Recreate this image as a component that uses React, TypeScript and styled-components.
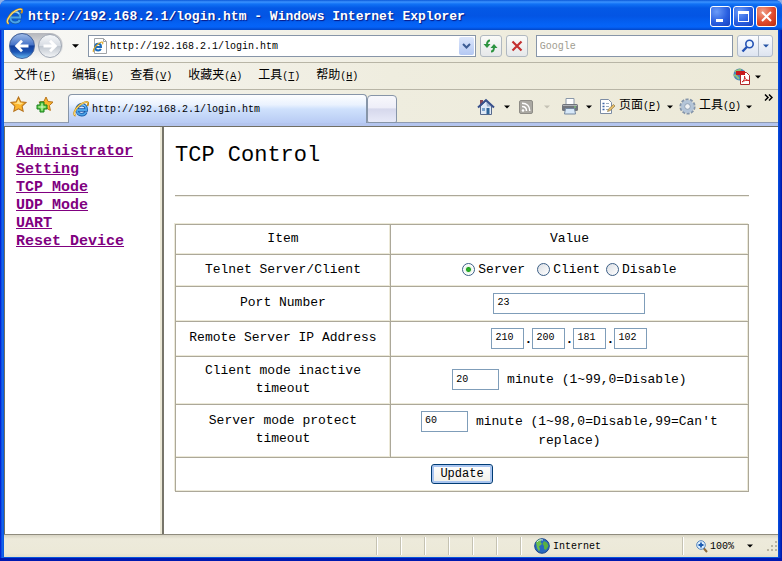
import React from "react";
import styled, { createGlobalStyle, css } from "styled-components";

const MONO = `"Liberation Mono", "Noto Sans CJK SC", monospace`;

const GlobalStyle = createGlobalStyle`
  *, *::before, *::after { box-sizing: border-box; }
  body { margin: 0; background: #8fb0e8; font-family: ${MONO}; color: #000; }
  button, input { font-family: inherit; margin: 0; }
  button { padding: 0; border: 0; background: none; color: inherit; }
`;

/* ---------- window frame ---------- */

const Window = styled.div`
  min-height: 100vh;
  display: flex;
  flex-direction: column;
  padding: 0 4px 4px;
  border-radius: 7px 7px 0 0;
  background: linear-gradient(90deg, #0019cf 0, #0831d9 1px, #166aee 2px, #0855dd 4px, #0855dd calc(100% - 4px), #0441d8 calc(100% - 3px), #0013a5 100%);
  box-shadow: inset 0 -3px 0 #0018b0;
`;

const TitleBar = styled.header`
  height: 30px;
  margin: 0 -4px;
  padding: 2px 5px 0 6px;
  display: flex;
  align-items: center;
  gap: 5px;
  border-radius: 7px 7px 0 0;
  background: linear-gradient(#0a58d8 0, #3b93ff 2px, #1172f5 4px, #0459e6 8px, #0355e4 16px, #0462f5 24px, #0563f8 27px, #0246c8 30px);
`;

const Title = styled.h1`
  flex: 1;
  margin: 0;
  padding-top: 2px;
  font-size: 13px;
  line-height: 18px;
  color: #fff;
  text-shadow: 1px 1px 1px #0a1883;
  white-space: nowrap;
  overflow: hidden;
`;

const Captions = styled.div`
  display: flex;
  gap: 2px;
`;

const CaptionButton = styled.button<{ $close?: boolean }>`
  width: 21px;
  height: 21px;
  display: grid;
  place-items: center;
  border: 1px solid #fff;
  border-radius: 3px;
  background: ${(p) =>
    p.$close
      ? "radial-gradient(circle at 30% 25%, #f0a088, #e0492c 55%, #b82c10)"
      : "radial-gradient(circle at 30% 25%, #6c9cf8, #2a5fe0 55%, #1540c0)"};
`;

/* ---------- toolbars ---------- */

const NavBar = styled.div`
  height: 32px;
  display: flex;
  align-items: center;
  padding: 0 5px;
  background: linear-gradient(90deg, #f8f8f6, #efeddf 60%, #ece9d8);
`;

const NavPair = styled.div`
  display: flex;
  align-items: center;
  height: 26px;
  gap: 3px;
  padding-right: 1px;
  border-radius: 13px;
  background: linear-gradient(#b4b6bc, #e8e8e8 60%, transparent);
`;

const RoundButton = styled.button<{ $active?: boolean }>`
  width: ${(p) => (p.$active ? 26 : 24)}px;
  height: ${(p) => (p.$active ? 26 : 24)}px;
  border-radius: 50%;
  display: grid;
  place-items: center;
  border: 1px solid ${(p) => (p.$active ? "#40609c" : "#a0a8b4")};
  background: ${(p) =>
    p.$active
      ? "linear-gradient(#9db9e6 0, #4674c8 45%, #123f9c 50%, #1c55b4 75%, #62b4ee)"
      : "linear-gradient(#f6f8fa 0, #d8dde4 48%, #c0c7d0 52%, #f2f4f6)"};
`;

const ArrowButton = styled.button<{ $w: number }>`
  width: ${(p) => p.$w}px;
  height: 20px;
  display: grid;
  place-items: center;
`;

const boxed = css`
  height: 22px;
  border: 1px solid #8795a8;
  background: #fff;
`;

const AddressBox = styled.div`
  ${boxed}
  flex: 2 1 9px;
  min-width: 0;
  display: flex;
  align-items: center;
  padding: 0 1px 0 3px;
  gap: 2px;
`;

const BareInput = styled.input`
  flex: 1;
  min-width: 0;
  border: 0;
  padding: 1px 0 0;
  height: 18px;
  background: transparent;
  font-size: 10px;
  outline: none;
`;

const DropButton = styled.button`
  width: 15px;
  height: 18px;
  display: grid;
  place-items: center;
  border-radius: 2px;
  background: linear-gradient(#dce6fb, #b4c8f2);
`;

const ToolButton = styled.button`
  width: 22px;
  height: 22px;
  margin-left: 4px;
  display: grid;
  place-items: center;
  border: 1px solid #b0b8c0;
  border-radius: 3px;
  background: linear-gradient(#fbfbf8, #e6e8ea);
`;

const SearchInput = styled.input`
  ${boxed}
  flex: 1 1 0;
  min-width: 0;
  margin-left: 8px;
  padding: 0 3px;
  font-size: 10px;
  outline: none;
  &::placeholder { color: #a09c90; opacity: 1; }
`;

const SearchGroup = styled.div`
  display: flex;
  height: 22px;
  margin-left: 4px;
  border: 1px solid #b0bac8;
  border-radius: 3px;
  background: linear-gradient(#fcfdff, #dde4f0);
  button { display: grid; place-items: center; }
  button:first-child { width: 21px; border-right: 1px solid #b0bac8; }
  button:last-child { width: 13px; }
`;

const MenuBar = styled.nav`
  height: 28px;
  display: flex;
  align-items: center;
  gap: 16px;
  padding: 1px 17px 0 10px;
  border-top: 1px solid #b8b5a6;
  border-bottom: 1px solid #b8b5a6;
  background: linear-gradient(90deg, #f6f5f1, #efeddf 50%, #ece9d8);
`;

const MenuButton = styled.button`
  font-size: 12px;
  line-height: 18px;
  white-space: nowrap;
  span { font-size: 10px; }
`;

const PdfButton = styled.button`
  margin-left: auto;
  display: flex;
  align-items: center;
  gap: 5px;
`;

const TabRow = styled.div`
  height: 36px;
  display: flex;
  align-items: flex-end;
  padding: 0 4px 0 5px;
  border-bottom: 3px solid #b4c5ee;
  box-shadow: inset 0 -1px 0 #8f9bb0;
  background: linear-gradient(90deg, #f4f4f0, #efeddf 50%, #ece9d8);
`;

const Favorites = styled.div`
  display: flex;
  gap: 9px;
  width: 59px;
  height: 27px;
  padding-left: 1px;
  align-items: flex-start;
`;

const Tab = styled.button`
  flex: 0 1 299px;
  min-width: 120px;
  height: 29px;
  display: flex;
  align-items: center;
  gap: 3px;
  padding: 0 4px;
  border: 1px solid #8795a8;
  border-bottom: 0;
  border-radius: 4px 4px 0 0;
  background: linear-gradient(#fdfeff 0, #eaf2fe 35%, #cfe1fc 50%, #b8cbf4);
  font-size: 10px;
  text-align: left;
  white-space: nowrap;
`;

const NewTab = styled.button`
  width: 30px;
  height: 28px;
  border: 1px solid #8795a8;
  border-radius: 4px 4px 2px 2px;
  background: linear-gradient(#f8f8fc 0, #eeeef8 45%, #d6d8ec 50%, #e8eaf8);
`;

const Commands = styled.div`
  flex: 1;
  height: 33px;
  display: flex;
  align-items: center;
  justify-content: flex-end;
`;

const Command = styled.button`
  display: flex;
  align-items: center;
  gap: 3px;
`;

const CommandLabel = styled.div`
  font-size: 12px;
  line-height: 18px;
  white-space: nowrap;
  span { font-size: 10px; }
`;

const More = styled.button`
  align-self: flex-start;
  width: 11px;
  margin-left: 6px;
`;

/* ---------- page ---------- */

const Frames = styled.div`
  flex: 1;
  display: flex;
  border-top: 1px solid #716f64;
  border-left: 1px solid #716f64;
  background: #fff;
`;

const Sidebar = styled.nav`
  flex: 0 0 159px;
  padding: 16px 8px 0 11px;
  border-right: 2px solid #77756a;
  box-shadow: inset -2px 0 0 #ece9d8;
  display: flex;
  flex-direction: column;
  align-items: flex-start;
`;

const SideLink = styled.a`
  font-size: 15px;
  line-height: 18px;
  font-weight: bold;
  color: #800080;
  text-decoration: underline;
`;

const Main = styled.main`
  flex: 1;
  min-width: 0;
  padding: 15px 29px 0 11px;
`;

const Heading = styled.h2`
  margin: 0;
  font-size: 22px;
  line-height: 28px;
  font-weight: normal;
`;

const Rule = styled.hr`
  margin: 25px 0 27px;
  border: 0;
  border-top: 1px solid #aca899;
  border-bottom: 1px solid #f0eee4;
`;

const Grid = styled.table`
  width: 100%;
  border-collapse: collapse;
  table-layout: fixed;
  font-size: 13px;
  line-height: 18px;
  box-shadow: -1px -1px 0 #ece9d8;
`;

const Row = styled.tr<{ $h: number }>`
  height: ${(p) => p.$h}px;
`;

const cell = css`
  padding: 0 8px 2px;
  border: 1px solid #aca899;
  box-shadow: inset -1px -1px 0 #ece9d8;
  text-align: center;
  font-weight: normal;
`;
const Th = styled.th<{ $w?: string }>`
  ${cell}
  width: ${(p) => p.$w ?? "auto"};
`;
const Td = styled.td`
  ${cell}
`;

const Field = styled.input<{ $w: number }>`
  width: ${(p) => p.$w}px;
  height: 21px;
  padding: 0 3px 1px;
  border: 1px solid #7f9db9;
  background: #fff;
  font-size: 10px;
  vertical-align: middle;
`;

const Choices = styled.div`
  display: flex;
  justify-content: center;
  gap: 6px;
  label { display: flex; align-items: center; gap: 3px; }
  label:first-child { margin-right: 6px; }
`;

const Radio = styled.input`
  appearance: none;
  width: 13px;
  height: 13px;
  border: 1px solid #3c5f86;
  border-radius: 50%;
  background: linear-gradient(135deg, #dcdfe4, #fff);
  &:checked {
    background: radial-gradient(circle, #2fb52a 0, #21a121 2px, #e8f4e8 3px, #fff 5px);
  }
`;

const IpRow = styled.div`
  display: flex;
  justify-content: center;
  align-items: center;
  span { width: 8px; padding-top: 4px; font-weight: bold; }
`;

const Submit = styled.button`
  width: 62px;
  height: 20px;
  border: 1px solid #003c74;
  border-radius: 3px;
  background: linear-gradient(#fff, #f0efe8);
  box-shadow: inset 0 0 0 2px #a9c5f0;
  font-size: 12px;
  line-height: 16px;
  vertical-align: middle;
`;

/* ---------- status bar ---------- */

const StatusBar = styled.footer`
  height: 23px;
  display: flex;
  align-items: center;
  border-top: 1px solid #8f8c7e;
  background: linear-gradient(#d8d4c4 0, #edeadb 4px, #ece9d8 18px, #e2dfcc);
  font-size: 10px;
`;

const Pane = styled.div<{ $w?: number }>`
  flex: ${(p) => (p.$w ? `0 0 ${p.$w}px` : "1")};
  height: 18px;
  display: flex;
  align-items: center;
  gap: 3px;
  padding-left: 12px;
  border-right: 1px solid #fff;
  box-shadow: inset -1px 0 0 #c5c2b2;
  white-space: nowrap;
  &:last-child { border: 0; box-shadow: none; }
`;

const ZoomButton = styled.button`
  display: flex;
  align-items: center;
  gap: 2px;
  font-size: 10px;
  svg:last-child { margin-left: 11px; }
`;

const Grip = styled.span`
  align-self: flex-end;
  margin-left: auto;
  height: 14px;
`;

/* ---------- icons ---------- */

const Caret = ({ color = "#000", size = 7 }: { color?: string; size?: number }) => (
  <svg width={size} height="4" viewBox="0 0 8 4" aria-hidden="true">
    <path d="M0 0h8L4 4z" fill={color} />
  </svg>
);

const IeIcon = ({ size }: { size: number }) => (
  <svg width={size} height={size} viewBox="0 0 16 16" fill="none" aria-hidden="true">
    <path d="M4 9h9.300c.2-3.300-1.700-5.200-4.500-5.200S4 5.900 4 8.800s1.900 4.900 4.700 4.900c2.100 0 3.600-.9 4.200-2.500" stroke="#1658a8" strokeWidth="3.400" />
    <path d="M4 9h9.300c.2-3.300-1.700-5.200-4.500-5.200S4 5.900 4 8.800s1.900 4.900 4.700 4.900c2.100 0 3.600-.9 4.200-2.500" stroke="#4ba4e8" strokeWidth="1.800" />
    <path d="M4.600 6.500c.6-1.800 2-2.900 4-2.900 1.600 0 2.900.6 3.700 1.700" stroke="#a4dcff" strokeWidth="1" />
    <path d="M2.600 14.800C-.5 13.500 2 8 6.500 4.300 10 1.400 14 .2 15 1.500c.5.800.2 2-.7 3.500" stroke="#c8901c" strokeWidth="1.900" />
    <path d="M2.500 14.600C-.3 13.300 2.200 8 6.600 4.300 10 1.500 14 .4 14.900 1.600" stroke="#ffe27a" strokeWidth="1" />
  </svg>
);

const PageIe = () => (
  <svg width="16" height="18" viewBox="0 0 16 18" fill="none" aria-hidden="true">
    <path d="M2.500 1.500h9l3 3v12h-12z" fill="#fff" stroke="#a0a4a8" />
    <path d="M11.500 1.500v3h3" stroke="#a0a4a8" />
    <path d="M3.500 10h5.500c0-2-1-3.200-2.800-3.200S3.200 8.200 3.200 10.200s1.200 3.200 3 3.200c1.300 0 2.200-.6 2.600-1.600" stroke="#1d6cbc" strokeWidth="2" />
    <path d="M1.500 15c-1.500-2.500 4.500-9 8-10 1.500-.3 1.700.8 1 2.200" stroke="#dba520" strokeWidth="1.100" />
  </svg>
);

const NavArrow = ({ flip, color }: { flip?: boolean; color: string }) => (
  <svg width="16" height="14" viewBox="0 0 16 14" fill="none" stroke={color} strokeWidth="2.800" aria-hidden="true">
    {flip ? <path d="M1.500 7H13M8 1.800 13.300 7 8 12.200" /> : <path d="M14.500 7H3M8 1.800 2.700 7 8 12.200" />}
  </svg>
);

const STAR = "M8 1l2.100 4.500 5 .6-3.700 3.400 1 4.900L8 12l-4.400 2.400 1-4.900L.9 6.100l5-.6z";

const StarIcon = () => (
  <svg width="17" height="17" viewBox="0 0 16 16" aria-hidden="true">
    <path d={STAR} fill="#fbb52c" stroke="#b8741c" />
    <path d="M8 3l1.300 3.200 3.200.5-2.800 1.500L8 7.500 3.500 7l2.900-.6z" fill="#ffe28c" />
  </svg>
);

const StarAddIcon = () => (
  <svg width="17" height="17" viewBox="0 0 17 17" aria-hidden="true">
    <g transform="translate(2 0)"><path d={STAR} fill="#fbb52c" stroke="#b8741c" /></g>
    <path d="M4 6h4v3h3v4H8v3H4v-3H1V9h3z" fill="#5ecb46" stroke="#17801d" />
    <path d="M6 7.500v7M2.500 11h7" stroke="#d8ffc8" />
  </svg>
);

const RefreshIcon = () => (
  <svg width="15" height="14" viewBox="0 0 15 14" fill="none" aria-hidden="true">
    <path d="M7 1.500C4.800 1.500 4 3 4 6" stroke="#2c9440" strokeWidth="2" />
    <path d="M.5 5h7L4 9z" fill="#2c9440" />
    <path d="M8 12.500c2.200 0 3-1.500 3-4.500" stroke="#2c9440" strokeWidth="2" />
    <path d="M7.500 9h7L11 5z" fill="#2c9440" />
  </svg>
);

const StopIcon = () => (
  <svg width="12" height="12" viewBox="0 0 12 12" stroke="#c43030" strokeWidth="2.200" aria-hidden="true">
    <path d="M1.500 1.500l9 9M10.500 1.500l-9 9" />
  </svg>
);

const SearchIcon = () => (
  <svg width="14" height="14" viewBox="0 0 14 14" fill="none" aria-hidden="true">
    <circle cx="8.500" cy="5" r="3.700" fill="#eaf4ff" stroke="#2452b4" strokeWidth="1.600" />
    <path d="M5.800 8 1.500 12.500" stroke="#2452b4" strokeWidth="2.400" />
  </svg>
);

const PdfIcon = () => (
  <svg width="17" height="17" viewBox="0 0 17 17" fill="none" aria-hidden="true">
    <circle cx="6.500" cy="6.500" r="6" fill="#4c82b8" />
    <path d="M2 3c2 1 4-2 6-1M1 8c2-2 3 1 5 3" stroke="#8fc47c" strokeWidth="2" />
    <path d="M7.500 4.500h6l3 3v9h-9z" fill="#fff" stroke="#b02a2a" />
    <path d="M3 3h9v4H3z" fill="#c8181c" />
    <path d="M9 14c2-1 3-4 2.500-6 0 3 2 4.500 4.500 4.500-2-.5-5 0-7 1.500z" stroke="#d02020" />
  </svg>
);

const HomeIcon = () => (
  <svg width="18" height="18" viewBox="0 0 18 18" fill="none" aria-hidden="true">
    <path d="M3 2h3v5H3z" fill="#8c4c58" />
    <path d="M3.500 8v8.500h11V8L9 3z" fill="#dfe9f6" stroke="#56698c" />
    <path d="M9 3l5.500 5.500H10z" fill="#9fb0cc" />
    <path d="M1 9.500 9 2l8 7.500" stroke="#38508c" strokeWidth="2" />
    <path d="M9.500 10h3v6h-3z" fill="#2e6498" />
    <path d="M5 10h3v3H5z" fill="#7ba2cc" />
  </svg>
);

const RssIcon = () => (
  <svg width="14" height="14" viewBox="0 0 14 14" fill="none" aria-hidden="true">
    <rect x=".5" y=".5" width="13" height="13" rx="1.500" fill="#aaa8a2" stroke="#8e8c86" />
    <circle cx="4" cy="10.500" r="1.300" fill="#fff" />
    <path d="M3 6.500c2.700 0 4.500 1.800 4.500 4.500M3 3.200c4.700 0 7.800 3.100 7.800 7.800" stroke="#fff" strokeWidth="1.500" />
  </svg>
);

const PrinterIcon = () => (
  <svg width="18" height="17" viewBox="0 0 18 17" aria-hidden="true">
    <path d="M5 .5h8v6H5z" fill="#fff" stroke="#8a98a8" />
    <rect x="1" y="6" width="16" height="7" rx="1.500" fill="#71757c" />
    <path d="M2 7.500h14" stroke="#b0b4ba" />
    <path d="M4.500 10.500h9l1 5.500h-11z" fill="#d7e8f8" stroke="#7488a0" />
    <rect x="13" y="8.500" width="2" height="1" fill="#7ee070" />
  </svg>
);

const PageIcon = () => (
  <svg width="17" height="17" viewBox="0 0 17 17" fill="none" aria-hidden="true">
    <path d="M1.500 1.500h8l3 3v11h-11z" fill="#fff" stroke="#7c8ca4" />
    <path d="M3.500 5.500h2M3.500 8.500h2M3.500 11.500h2" stroke="#3f66a8" strokeWidth="1.500" />
    <path d="M7 5.500h3M7 8.500h3M7 11.500h2" stroke="#9aabbf" />
    <path d="m8.500 13.500 1-2.500 5-4.500 1.500 1.500-5 4.700z" fill="#e9c06c" stroke="#8b7544" strokeWidth=".7" />
  </svg>
);

const GearIcon = () => (
  <svg width="17" height="17" viewBox="0 0 17 17" fill="none" aria-hidden="true">
    <circle cx="8.500" cy="8.500" r="6.800" stroke="#8595aa" strokeWidth="2.600" strokeDasharray="3 1.270" />
    <circle cx="8.500" cy="8.500" r="4.600" stroke="#b4c5d8" strokeWidth="3.800" />
    <circle cx="8.500" cy="8.500" r="2.800" fill="#f0f2f4" stroke="#7f92a8" strokeWidth=".8" />
  </svg>
);

const GlobeIcon = () => (
  <svg width="16" height="16" viewBox="0 0 16 16" aria-hidden="true">
    <circle cx="8" cy="8" r="7.300" fill="#2868c0" stroke="#1a4488" />
    <path d="M2 4c2-3 5-3 6-2.500L6.500 4 8 6 5 8.500 6 11l-1 2.500L3 10z" fill="#6cc04c" />
    <path d="M10 3l3 1.500L14.500 8 12 12l-2-1V8L8.500 6z" fill="#58b044" />
    <path d="M3 4c1.500-2 4-2.600 6-2" stroke="#cfe6ff" strokeWidth="1" fill="none" />
  </svg>
);

const ZoomIcon = () => (
  <svg width="12" height="13" viewBox="0 0 12 13" fill="none" aria-hidden="true">
    <path d="m7.500 8 3.500 4" stroke="#8c6a3c" strokeWidth="2" />
    <circle cx="5" cy="5" r="4.300" fill="#dcefff" stroke="#5484bc" />
    <path d="M5 2.500v5M2.500 5h5" stroke="#1c5cb0" strokeWidth="1.800" />
  </svg>
);

/* ---------- content ---------- */

const menus = [["文件", "F"], ["编辑", "E"], ["查看", "V"], ["收藏夹", "A"], ["工具", "T"], ["帮助", "H"]];
const links = ["Administrator", "Setting", "TCP Mode", "UDP Mode", "UART", "Reset Device"];
const ip = ["210", "200", "181", "102"];

const Mnemonic = ({ label, letter }: { label: string; letter: string }) => (
  <>{label}<span>(<u>{letter}</u>)</span></>
);

export default function App() {
  return (
    <>
      <GlobalStyle />
      <Window>
        <TitleBar>
          <IeIcon size={17} />
          <Title>http://192.168.2.1/login.htm - Windows Internet Explorer</Title>
          <Captions>
            <CaptionButton aria-label="Minimize">
              <svg width="13" height="13"><path d="M2 9h7v3H2z" fill="#fff" /></svg>
            </CaptionButton>
            <CaptionButton aria-label="Maximize">
              <svg width="13" height="13"><path d="M1 1h11v11H1zM2 4v7h9V4z" fill="#fff" fillRule="evenodd" /></svg>
            </CaptionButton>
            <CaptionButton $close aria-label="Close">
              <svg width="13" height="13"><path d="M2 2l9 9M11 2l-9 9" stroke="#fff" strokeWidth="2" /></svg>
            </CaptionButton>
          </Captions>
        </TitleBar>

        <NavBar>
          <NavPair>
            <RoundButton $active aria-label="Back"><NavArrow color="#fff" /></RoundButton>
            <RoundButton aria-label="Forward"><NavArrow flip color="#fff" /></RoundButton>
          </NavPair>
          <ArrowButton $w={25} aria-label="Recent pages"><Caret /></ArrowButton>
          <AddressBox>
            <PageIe />
            <BareInput aria-label="Address" defaultValue="http://192.168.2.1/login.htm" />
            <DropButton aria-label="Show addresses">
              <svg width="9" height="6" fill="none"><path d="M1 1l3.500 3.500L8 1" stroke="#3c5c94" strokeWidth="2" /></svg>
            </DropButton>
          </AddressBox>
          <ToolButton aria-label="Refresh"><RefreshIcon /></ToolButton>
          <ToolButton aria-label="Stop"><StopIcon /></ToolButton>
          <SearchInput aria-label="Search" placeholder="Google" />
          <SearchGroup>
            <button aria-label="Search"><SearchIcon /></button>
            <button aria-label="Search options"><Caret color="#2452a4" size={6} /></button>
          </SearchGroup>
        </NavBar>

        <MenuBar>
          {menus.map(([label, letter]) => (
            <MenuButton key={letter}><Mnemonic label={label} letter={letter} /></MenuButton>
          ))}
          <PdfButton aria-label="PDF tools"><PdfIcon /><Caret size={6} /></PdfButton>
        </MenuBar>

        <TabRow>
          <Favorites>
            <button aria-label="Favorites"><StarIcon /></button>
            <button aria-label="Add to favorites"><StarAddIcon /></button>
          </Favorites>
          <Tab><IeIcon size={16} />http://192.168.2.1/login.htm</Tab>
          <NewTab aria-label="New tab" />
          <Commands>
            <Command aria-label="Home"><HomeIcon /></Command>
            <ArrowButton $w={24} aria-label="Home options"><Caret size={6} /></ArrowButton>
            <Command aria-label="Feeds"><RssIcon /></Command>
            <ArrowButton $w={28} aria-label="Feed options"><Caret size={6} color="#c4c1b4" /></ArrowButton>
            <Command aria-label="Print"><PrinterIcon /></Command>
            <ArrowButton $w={20} aria-label="Print options"><Caret size={6} /></ArrowButton>
            <Command>
              <PageIcon />
              <CommandLabel><Mnemonic label="页面" letter="P" /></CommandLabel>
            </Command>
            <ArrowButton $w={18} aria-label="Page options"><Caret size={6} /></ArrowButton>
            <Command>
              <GearIcon />
              <CommandLabel><Mnemonic label="工具" letter="O" /></CommandLabel>
            </Command>
            <ArrowButton $w={16} aria-label="Tool options"><Caret size={6} /></ArrowButton>
            <More aria-label="More commands">
              <svg width="9" height="7" fill="none"><path d="M1 .5l3 3-3 3M5 .5l3 3-3 3" stroke="#000" strokeWidth="1.500" /></svg>
            </More>
          </Commands>
        </TabRow>

        <Frames>
          <Sidebar>
            {links.map((text) => <SideLink key={text} href="#">{text}</SideLink>)}
          </Sidebar>
          <Main>
            <Heading>TCP Control</Heading>
            <Rule />
            <form onSubmit={(e) => e.preventDefault()}>
              <Grid>
                <thead>
                  <Row $h={30}><Th $w="37.5%" scope="col">Item</Th><Th scope="col">Value</Th></Row>
                </thead>
                <tbody>
                  <Row $h={32}>
                    <Td>Telnet Server/Client</Td>
                    <Td>
                      <Choices>
                        {["Server", "Client", "Disable"].map((mode) => (
                          <label key={mode}>
                            <Radio type="radio" name="mode" defaultChecked={mode === "Server"} />{mode}
                          </label>
                        ))}
                      </Choices>
                    </Td>
                  </Row>
                  <Row $h={35}>
                    <Td><label htmlFor="port">Port Number</label></Td>
                    <Td><Field id="port" $w={152} defaultValue="23" /></Td>
                  </Row>
                  <Row $h={35}>
                    <Td>Remote Server IP Address</Td>
                    <Td>
                      <IpRow>
                        {ip.map((part, i) => (
                          <React.Fragment key={part}>
                            {i > 0 && <span>.</span>}
                            <Field $w={33} aria-label={`IP address part ${i + 1}`} defaultValue={part} />
                          </React.Fragment>
                        ))}
                      </IpRow>
                    </Td>
                  </Row>
                  <Row $h={48}>
                    <Td><label htmlFor="inactive">Client mode inactive timeout</label></Td>
                    <Td><Field id="inactive" $w={47} defaultValue="20" /> minute (1~99,0=Disable)</Td>
                  </Row>
                  <Row $h={53}>
                    <Td><label htmlFor="protect">Server mode protect timeout</label></Td>
                    <Td><Field id="protect" $w={47} defaultValue="60" /> minute (1~98,0=Disable,99=Can't replace)</Td>
                  </Row>
                  <Row $h={34}>
                    <Td colSpan={2}><Submit type="submit">Update</Submit></Td>
                  </Row>
                </tbody>
              </Grid>
            </form>
          </Main>
        </Frames>

        <StatusBar>
          <Pane />
          {[0, 1, 2, 3, 4, 5].map((n) => <Pane key={n} $w={24} />)}
          <Pane $w={162}><GlobeIcon />Internet</Pane>
          <Pane $w={94}>
            <ZoomButton><ZoomIcon />100%<Caret size={6} /></ZoomButton>
            <Grip>
              <svg width="11" height="11" fill="#b8b4a2">
                <path d="M8 0h2v2H8zM4 4h2v2H4zM8 4h2v2H8zM0 8h2v2H0zM4 8h2v2H4zM8 8h2v2H8z" />
              </svg>
            </Grip>
          </Pane>
        </StatusBar>
      </Window>
    </>
  );
}
